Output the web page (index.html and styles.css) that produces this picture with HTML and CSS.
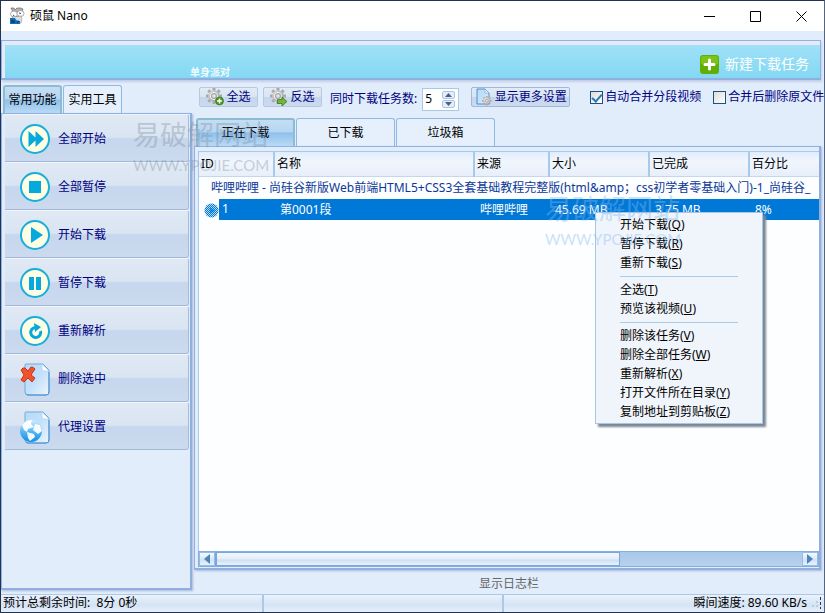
FILE: index.html
```html
<!DOCTYPE html>
<html lang="zh-CN">
<head>
<meta charset="utf-8">
<title>硕鼠 Nano</title>
<link rel="stylesheet" href="styles.css">
</head>
<body>
<svg class="defs" aria-hidden="true">
  <defs>
    <linearGradient id="paper" x1="0" y1="0" x2="1" y2="1"><stop offset="0" stop-color="#b5dbfa"/><stop offset=".5" stop-color="#c4e0fa"/><stop offset="1" stop-color="#ecf6fe"/></linearGradient>
    <linearGradient id="globe" x1="0" y1="0" x2="0" y2="1"><stop offset="0" stop-color="#d4eeff"/><stop offset=".5" stop-color="#5bb8f3"/><stop offset="1" stop-color="#0e8ee4"/></linearGradient>
    <linearGradient id="steel" x1="0" y1="0" x2="1" y2="1"><stop offset="0" stop-color="#dcdcdc"/><stop offset="1" stop-color="#9a9a9a"/></linearGradient>
    <pattern id="dither" width="2" height="2" patternUnits="userSpaceOnUse"><path d="M0 0h1v1H0zM1 1h1v1H1z" fill="#0078d7" shape-rendering="crispEdges"/></pattern>
    <g id="gear">
      <g stroke="#a9a9a9" stroke-width="3"><path d="M8 0v16M0 8h16M2.300 2.300l11.400 11.400M13.700 2.300L2.300 13.700"/></g>
      <circle cx="8" cy="8" r="5.8" fill="url(#steel)"/><circle cx="8" cy="8" r="3.6" fill="none" stroke="#f2f2f2"/><circle cx="8" cy="8" r="2.4" fill="#d9e4f3" stroke="#8c8c8c" stroke-width=".8"/>
    </g>
    <g id="disc"><circle cx="15" cy="15" r="14" fill="#fdfee3" stroke="#16aedb" stroke-width="2"/></g>
    <g id="page"><path d="M6 1h17l6 6v22q0 3-3 3H8q-3 0-3-3V2q0-1 1-1z" fill="url(#paper)" stroke="#73a9dc"/><path d="M22 1l7 7h-5q-2 0-2-2z" fill="#fff" stroke="#a9cff0" stroke-width=".7"/><path d="M6 31q1 1 2 1h18q3 0 3-3V9" fill="none" stroke="#4a8fd2"/></g>
  </defs>
</svg>

<header class="titlebar">
  <svg class="logo" viewBox="0 0 16 18" width="16" height="18">
    <path d="M2 1h3l1 2 2-2h4l2 1-1 3H4z" fill="#b4b4b4" stroke="#555" stroke-width=".6"/>
    <ellipse cx="5" cy="7" rx="3.5" ry="3" fill="#fff" stroke="#888" stroke-width=".7"/>
    <ellipse cx="11.500" cy="6.500" rx="3.500" ry="3" fill="#fff" stroke="#888" stroke-width=".7"/>
    <path d="M4 8l1.500 1M10 6l2 .5M7 10l3-.5 1 1" stroke="#444" fill="none"/>
    <path d="M3 10l9-1 1 4-1 3H6z" fill="#dedede" stroke="#888" stroke-width=".5"/>
    <path d="M1 11h5l1 2 4 1v3H1z" fill="#126fb7"/><path d="M3 16v-3l2 3v-3M8 16l2-2" stroke="#073763" fill="none"/>
  </svg>
  <h1>硕鼠 Nano</h1>
  <div class="window-buttons">
    <button type="button" aria-label="最小化"><svg width="11" height="11"><path d="M0 5.500h11" /></svg></button>
    <button type="button" aria-label="最大化"><svg width="11" height="11"><path d="M.5.5h10v10H.5z"/></svg></button>
    <button type="button" aria-label="关闭"><svg width="11" height="11"><path d="M.5.5l10 10M10.500.5l-10 10"/></svg></button>
  </div>
</header>

<section class="banner">
  <span class="slogan">单身派对</span>
  <button type="button" class="new-task">
    <svg width="19" height="19"><rect width="19" height="19" rx="3" fill="#62ae04"/><path d="M1 3q0-2 2-2h13q2 0 2 2v6H1z" fill="#7cc217"/><path d="M9.500 5v9M5 9.500h9" stroke="#fff" stroke-width="3" stroke-linecap="round"/></svg>
    <span>新建下载任务</span>
  </button>
</section>

<main class="workspace">
  <aside class="sidebar">
    <div class="tabs side-tabs">
      <button type="button" class="tab active">常用功能</button>
      <button type="button" class="tab">实用工具</button>
    </div>
    <nav class="panel actions">
      <button type="button" class="action"><svg width="30" height="30"><use href="#disc"/><path d="M8.500 7v16l7-6.500V23l8.500-8-8.500-8v6.500z" fill="#06a9dc"/></svg>全部开始</button>
      <button type="button" class="action"><svg width="30" height="30"><use href="#disc"/><path d="M9 9h12v12H9z" fill="#06a9dc"/></svg>全部暂停</button>
      <button type="button" class="action"><svg width="30" height="30"><use href="#disc"/><path d="M11 7v16l12-8z" fill="#06a9dc"/></svg>开始下载</button>
      <button type="button" class="action"><svg width="30" height="30"><use href="#disc"/><path d="M9 9h5v13H9zM16 9h5v13h-5z" fill="#06a9dc"/></svg>暂停下载</button>
      <button type="button" class="action"><svg width="30" height="30"><use href="#disc"/><path d="M15.500 11.500A5 5 0 1 0 20.500 15" fill="none" stroke="#06a9dc" stroke-width="3"/><path d="M14 7l7 4-6 5z" fill="#06a9dc"/></svg>重新解析</button>
      <button type="button" class="action"><svg width="30" height="33"><use href="#page"/><path d="M1 7q2-3 4-2l3 3 3-4q3 0 4 2l-4 6 4 3-3 4-4-4-4 4-3-2 3-5z" fill="#f0522c" stroke="#ce3417"/></svg>删除选中</button>
      <button type="button" class="action"><svg width="30" height="33"><use href="#page"/><circle cx="11" cy="20" r="11" fill="url(#globe)"/><path d="M2 14q4-5 10-5l-1 4 3 3-6 2-1 3-3-2zM15 13l5 1 2 6-4 3-5-4zM7 21l7 2 1 3-5 4-2-3z" fill="#fff" opacity=".93"/></svg>代理设置</button>
    </nav>
  </aside>

  <section class="content">
    <div class="toolbar">
      <button type="button" class="tool"><svg width="18" height="18"><use href="#gear"/><circle cx="13.500" cy="13" r="4" fill="#4a9a1c" stroke="#2e7210" stroke-width=".6"/><path d="M13.500 10.500v5M11 13h5" stroke="#fff" stroke-width="1.500"/></svg>全选</button>
      <button type="button" class="tool"><svg width="18" height="18"><use href="#gear"/><path d="M7.500 11.500H12V9l5 4.500-5 4.500v-2.500H7.500z" fill="#72b53a" stroke="#2e7210" stroke-width=".7"/></svg>反选</button>
      <label class="limit" for="limit">同时下载任务数:</label>
      <span class="spinner">
        <input id="limit" type="number" value="5" min="1">
        <span class="steps">
          <button type="button" aria-label="增加"><svg width="7" height="4"><path d="M0 4h7L3.500 0z"/></svg></button>
          <button type="button" aria-label="减少"><svg width="7" height="4"><path d="M0 0h7L3.500 4z"/></svg></button>
        </span>
      </span>
      <button type="button" class="tool more"><svg width="18" height="18"><path d="M2 1h8l4 4v11H2z" fill="url(#paper)" stroke="#4a8fd2"/><path d="M10 1v4h4z" fill="#fff" stroke="#73a9dc" stroke-width=".7"/><g transform="translate(7 8) scale(.6)"><use href="#gear"/></g></svg>显示更多设置</button>
      <label class="check"><input type="checkbox" checked>自动合并分段视频</label>
      <label class="check"><input type="checkbox">合并后删除原文件</label>
    </div>

    <div class="tabs list-tabs">
      <button type="button" class="tab active">正在下载</button>
      <button type="button" class="tab">已下载</button>
      <button type="button" class="tab">垃圾箱</button>
    </div>

    <div class="panel list-panel">
      <div class="list">
        <table>
          <colgroup><col class="c-id"><col class="c-name"><col class="c-source"><col class="c-size"><col class="c-done"><col></colgroup>
          <thead><tr><th>ID</th><th>名称</th><th>来源</th><th>大小</th><th>已完成</th><th>百分比</th></tr></thead>
          <tbody>
            <tr class="group"><td colspan="6">哔哩哔哩 - 尚硅谷新版Web前端HTML5+CSS3全套基础教程完整版(html&amp;amp；css初学者零基础入门)-1_尚硅谷_</td></tr>
            <tr class="selected"><td class="id"><svg width="15" height="15"><circle cx="7.500" cy="7.500" r="7" fill="#b9dcf8"/><circle cx="7.500" cy="7.500" r="7" fill="url(#dither)"/><path d="M6 4v7l5-3.500z" fill="#0078d7" opacity=".7"/></svg><span>1</span></td><td>第0001段</td><td>哔哩哔哩</td><td>45.69 MB</td><td>3.75 MB</td><td>8%</td></tr>
          </tbody>
        </table>
      </div>
      <div class="scrollbar">
        <button type="button" aria-label="向左"><svg width="6" height="10"><path d="M6 0v10L0 5z"/></svg></button>
        <div class="track"><div class="thumb"></div></div>
        <button type="button" aria-label="向右"><svg width="6" height="10"><path d="M0 0v10l6-5z"/></svg></button>
      </div>
    </div>
    <button type="button" class="log-toggle">显示日志栏</button>
  </section>
</main>

<footer class="statusbar">
  <span>预计总剩余时间:&nbsp; 8分 0秒</span>
  <span></span>
  <span class="speed">瞬间速度: 89.60 KB/s</span>
  <svg class="grip" width="14" height="14"><path d="M2 10h2v2H2zM6 10h2v2H6zM6 6h2v2H6z" fill="#b7cae6"/><path d="M10.500 2v12" stroke="#4b2a62" stroke-dasharray="3 2"/></svg>
</footer>

<div class="menu" role="menu">
  <button type="button" role="menuitem">开始下载(<u>Q</u>)</button>
  <button type="button" role="menuitem">暂停下载(<u>R</u>)</button>
  <button type="button" role="menuitem">重新下载(<u>S</u>)</button>
  <hr>
  <button type="button" role="menuitem">全选(<u>T</u>)</button>
  <button type="button" role="menuitem">预览该视频(<u>U</u>)</button>
  <hr>
  <button type="button" role="menuitem">删除该任务(<u>V</u>)</button>
  <button type="button" role="menuitem">删除全部任务(<u>W</u>)</button>
  <button type="button" role="menuitem">重新解析(<u>X</u>)</button>
  <button type="button" role="menuitem">打开文件所在目录(<u>Y</u>)</button>
  <button type="button" role="menuitem">复制地址到剪贴板(<u>Z</u>)</button>
</div>

<div class="watermark wm-left"><b>易破解网站</b><span>WWW.YPOJIE.COM</span></div>
<div class="watermark wm-right"><b>易破解网站</b><span>WWW.YPOJIE.COM</span></div>
</body>
</html>
```

FILE: styles.css
```css
:root {
  --bg: #e1edfb;
  --line: #8db2e3;
  --pale-line: #a9c9e9;
  --navy: #00007f;
}

* { box-sizing: border-box; }

body {
  margin: 0;
  height: 100vh;
  display: flex;
  flex-direction: column;
  position: relative;
  overflow: hidden;
  border: 1px solid #24334f;
  border-right-color: #56657c;
  background: var(--bg);
  color: #000;
  font: 12px/16px "Noto Sans", "Noto Sans CJK SC", sans-serif;
}

button, input { font: inherit; color: inherit; padding: 0; margin: 0; border: 0; background: none; }
button { white-space: nowrap; }
svg { display: block; flex: none; }
.defs { position: absolute; width: 0; height: 0; }

/* Title bar */
.titlebar { display: flex; align-items: center; flex: none; height: 30px; padding-left: 8px; background: #fff; }
.titlebar h1 { flex: 1; margin: 0 0 0 5px; font-size: 12px; font-weight: 400; }
.window-buttons { display: flex; }
.window-buttons button { display: grid; place-items: center; width: 46px; height: 28px; }
.window-buttons svg { fill: none; stroke: #000; }

/* Banner */
.banner {
  display: flex;
  align-items: flex-end;
  justify-content: space-between;
  flex: none;
  height: 40px;
  margin: 9px 3px 0 0;
  padding: 0 11px 0 188px;
  border: 1px solid var(--line);
  border-bottom: 2px solid #8fb0df;
  box-shadow: 1px 2px 2px #c3cde9, inset 3px 4px #e5e9f8;
  background: linear-gradient(#a2e2f8, #84d8f3);
}
.slogan { color: #effbff; font-size: 10px; line-height: 12px; font-weight: 700; }
.new-task { display: flex; align-items: center; gap: 6px; padding-bottom: 4px; color: #fff; font-size: 14px; line-height: 20px; }

/* Workspace */
.workspace { flex: 1; min-height: 0; display: grid; grid-template-columns: 191px minmax(0, 1fr); column-gap: 2px; }
.sidebar { display: flex; flex-direction: column; padding: 5px 0 4px; }
.content { display: flex; flex-direction: column; min-width: 0; padding-top: 5px; }

.tabs { display: flex; flex: none; gap: 1px; height: 28px; }
.tab { border: 1px solid #91b9e5; border-bottom: 0; border-radius: 3px 3px 0 0; background: #e5f0fc; }
.tab.active {
  border: 2px solid #8bbcd1;
  border-bottom: 0;
  background: linear-gradient(#c4ddf3, #b7d6f2 45%, #8fc0eb 50%, #b9daf5);
}
.side-tabs { padding-left: 2px; }
.side-tabs .tab { width: 59px; }
.panel { border: 1px solid var(--line); border-right: 2px solid #8fb0df; border-bottom: 2px solid #8fb0df; box-shadow: 1px 1px 2px #aab6dc; }

.actions { flex: 1; padding: 0 1px 0 3px; }
.action {
  display: flex;
  align-items: center;
  gap: 8px;
  width: 100%;
  height: 48px;
  padding: 2px 0 0 15px;
  color: var(--navy);
  border-top: 1px solid #eef4fc;
  border-right: 1px solid #a8bcd9;
  border-bottom: 1px solid #a3b9d8;
  border-radius: 0 3px 3px 0;
  background: linear-gradient(#e0e9f4, #d9e5f2 48%, #c6d6ec 52%, #cbdaef);
}

/* Toolbar */
.toolbar { display: flex; align-items: center; flex: none; height: 26px; padding: 0 0 2px 5px; color: var(--navy); white-space: nowrap; overflow: hidden; }
.tool {
  display: flex;
  align-items: center;
  justify-content: center;
  flex: none;
  gap: 2px;
  width: 59px;
  height: 20px;
  margin-right: 5px;
  border: 1px solid #b7c9e2;
  border-radius: 2px;
  background: linear-gradient(#e2ebf6, #d9e5f2 48%, #c6d6ec 52%, #cbdaef);
}
.tool.more { width: 99px; margin-right: 20px; border-color: #a3b8d8; }
.limit { margin: 4px 5px 0 3px; }
.spinner { display: flex; flex: none; align-items: center; width: 37px; height: 23px; margin: 4px 12px 0 0; padding-right: 3px; border: 1px solid var(--pale-line); background: #fff; color: #000; }
.spinner input { flex: 1; min-width: 0; padding-left: 2px; appearance: textfield; outline: 0; }
.spinner input::-webkit-inner-spin-button { display: none; }
.steps { display: grid; gap: 1px; }
.steps button { display: grid; place-items: center; width: 13px; height: 8px; border: 1px solid #a9c5e6; border-radius: 2px; background: #e3eefa; }
.steps svg { fill: #4a5f80; }
.check { display: flex; align-items: center; flex: none; gap: 2px; margin-right: 12px; }
.check input { appearance: none; display: grid; place-items: center; width: 13px; height: 13px; border: 1px solid #1c5180; background: linear-gradient(135deg, #dcdcd7, #fff); }
.check input:checked::before { content: ""; width: 4px; height: 8px; margin-bottom: 2px; border: solid #2c76b5; border-width: 0 2px 2px 0; transform: rotate(42deg); }

/* Download list */
.list-tabs { margin-top: 7px; padding-left: 2px; }
.list-tabs .tab { width: 99px; }
.list-panel { flex: 1; min-height: 0; display: flex; flex-direction: column; margin-right: 3px; padding: 4px 0 1px 3px; }
.list { flex: 1; min-height: 0; overflow: hidden; border: 1px solid var(--pale-line); border-right: 0; border-bottom: 0; background: #fdfeff; }
table { width: 100%; table-layout: fixed; border-collapse: collapse; white-space: nowrap; }
.c-id, .c-source { width: 75px; }
.c-name { width: 200px; }
.c-size, .c-done { width: 100px; }
th { height: 24px; padding: 0 2px; font-weight: 400; text-align: left; border-right: 2px solid #a6cbea; border-bottom: 1px solid #c5d7ec; background: linear-gradient(#e1edfb, #f1f6fd 40%, #e7effa); }
th:last-child { border-right: 0; }
td { padding: 0 0 0 6px; overflow: hidden; }
.group td { height: 23px; padding-left: 12px; color: #0c3797; }
.selected td { height: 21px; background: #0078d7; color: #fff; }
.selected .id { padding: 0 0 0 5px; background: linear-gradient(90deg, #fdfeff 20px, #0078d7 20px); }
.id svg { display: inline-block; vertical-align: middle; }
.id span { margin-left: 3px; }

.scrollbar { display: flex; flex: none; height: 16px; border: 1px solid #82afdf; }
.scrollbar button { display: grid; place-items: center; width: 16px; background: linear-gradient(#f5f9fe, #d3e3f4 60%, #e7f2fc); border: 1px solid #9abbe3; }
.scrollbar svg { fill: #4c84be; }
.track { flex: 1; background: linear-gradient(#a9c7e8, #b8d1ed); }
.thumb { width: 69%; height: 100%; border: 1px solid #77a8dd; border-left-width: 2px; background: linear-gradient(#f1f6fd, #e6effa 45%, #cfdff2 60%, #e9f3fc); }
.log-toggle { flex: none; height: 24px; padding-top: 3px; color: #666; }

/* Status bar */
.statusbar { display: flex; flex: none; height: 18px; border-top: 1px solid var(--pale-line); background: linear-gradient(#eaf2fc, #d5e3f4 60%, #e6f0fb); }
.statusbar span { flex: 0 0 240px; padding-left: 2px; border-right: 2px solid var(--pale-line); }
.statusbar span:first-child { flex-basis: 263px; }
.statusbar .speed { flex: 1; border: 0; text-align: right; }
.grip { margin-left: 3px; }

/* Context menu */
.menu { position: absolute; left: 594px; top: 211px; width: 168px; padding: 2px 24px; border: 1px solid #a6c6e6; background: #f0f5fc; box-shadow: 3px 3px 2px #7b8794; }
.menu button { display: block; width: 100%; height: 19px; text-align: left; }
.menu hr { height: 1px; margin: 4px 0 3px; border: 0; background: #a8cbea; }

/* Watermarks */
.watermark { position: absolute; display: grid; color: #8594a8; opacity: .4; pointer-events: none; white-space: nowrap; }
.watermark b { font-size: 27px; line-height: 30px; font-weight: 400; }
.watermark span { font: 15px/30px Lato, sans-serif; }
.wm-left { left: 132px; top: 119px; }
.wm-right { left: 544px; top: 193px; color: #7db9ee; }
```
